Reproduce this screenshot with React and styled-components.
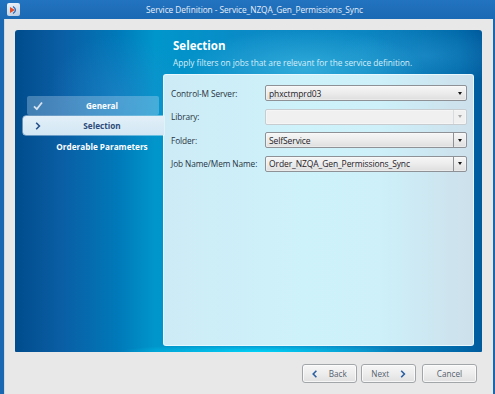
import React from "react";
import styled, { createGlobalStyle } from "styled-components";

const Global = createGlobalStyle`
  html, body { margin: 0; padding: 0; background: #e8e8e8; }
  body { font-family: "Open Sans", "Noto Sans", sans-serif; }
  * { box-sizing: border-box; }
`;

const Window = styled.div`
  width: 495px;
  height: 394px;
  display: flex;
  flex-direction: column;
  background: #1a67b2;
  overflow: hidden;
`;

const TitleBar = styled.div`
  height: 19px;
  flex: none;
  position: relative;
  display: flex;
  align-items: center;
  justify-content: center;
  padding-left: 14px;
  background: linear-gradient(180deg, #2273c0 0%, #1a69b4 100%);
  color: #e6eef8;
  font-size: 8.3px;
  letter-spacing: -0.05px;
`;

const AppIcon = styled.div`
  position: absolute;
  left: 7px;
  top: 3px;
  width: 13px;
  height: 13px;
  border-radius: 2px;
  background: linear-gradient(160deg, #f0f4fa, #b9cbe0);
  display: flex;
  align-items: center;
  justify-content: center;
`;

const Frame = styled.div`
  flex: 1;
  display: flex;
  flex-direction: column;
  margin-left: 4px;
  margin-right: 2px;
  padding: 11px 11px 0 10px;
  background: #e8e8e8;
  border-left: 1px solid #d0d8e0;
`;

const Panel = styled.div`
  height: 322px;
  flex: none;
  display: grid;
  grid-template-columns: 148px 1fr;
  grid-template-rows: 44px 1fr;
  padding: 0 8px 6px 0;
  border-radius: 3px 3px 1px 1px;
  background:
    radial-gradient(ellipse 140px 8px at 52% 100%, rgba(0, 215, 250, 0.95), rgba(0, 215, 250, 0) 100%),
    radial-gradient(ellipse 120px 40px at 62% 12%, rgba(80, 200, 235, 0.55), rgba(80, 200, 235, 0) 100%),
    radial-gradient(ellipse 90px 30px at 88% 8%, rgba(60, 170, 225, 0.35), rgba(60, 170, 225, 0) 100%),
    radial-gradient(ellipse 70px 60px at 22% 20%, rgba(60, 140, 210, 0.35), rgba(60, 140, 210, 0) 100%),
    linear-gradient(90deg, #004c8c 0%, #0a5ea4 10%, #0079b9 22%, #0096cb 30%, #0a8ac6 50%, #0b86c2 75%, #0068a8 95%, #005b9d 100%);
`;

const Header = styled.div`
  grid-column: 2;
  grid-row: 1;
  padding: 8px 0 0 10px;
  color: #ffffff;
`;

const HeaderTitle = styled.div`
  font-size: 11.5px;
  font-weight: 700;
  line-height: 16px;
`;

const HeaderSub = styled.div`
  font-size: 8.3px;
  line-height: 11px;
  margin-top: 3px;
  color: #d6eef8;
  letter-spacing: -0.03px;
`;

const Nav = styled.div`
  grid-column: 1;
  grid-row: 2;
  display: flex;
  flex-direction: column;
  padding-top: 22px;
`;

const NavItem = styled.div`
  position: relative;
  height: ${(p) => (p.$plain ? "18px" : "19px")};
  margin-left: ${(p) => (p.$active ? "8px" : "12px")};
  margin-right: ${(p) => (p.$active ? "-1px" : "4px")};
  margin-bottom: ${(p) => (p.$active ? "2px" : "1px")};
  display: flex;
  align-items: center;
  justify-content: center;
  padding-left: ${(p) => (p.$active ? "17px" : "18px")};
  border-radius: ${(p) => (p.$active ? "3px 0 0 3px" : "2px")};
  font-size: 8.2px;
  font-weight: 700;
  white-space: nowrap;
  color: ${(p) => (p.$active ? "#2c4a78" : "#ffffff")};
  background: ${(p) =>
    p.$active
      ? "linear-gradient(180deg, #e2eff8 0%, #d2e7f4 100%)"
      : p.$done
      ? "rgba(200, 225, 245, 0.32)"
      : "transparent"};
  box-shadow: ${(p) => (p.$active ? "0 0 0 0.5px rgba(255,255,255,0.8)" : "none")};
`;

const NavIcon = styled.span`
  position: absolute;
  left: ${(p) => p.$left}px;
  top: 50%;
  transform: translateY(-50%);
  display: flex;
`;

const Content = styled.div`
  grid-column: 2;
  grid-row: 2;
  border-radius: 3px;
  border: 1px solid rgba(235, 250, 255, 0.85);
  background: linear-gradient(90deg, #cdebf6 0%, #cef2fa 45%, #cdf0f9 70%, #cde0eb 100%);
  padding: 10px 6px 0 6px;
  display: flex;
  flex-direction: column;
  gap: 7.6px;
`;

const Row = styled.div`
  display: grid;
  grid-template-columns: 95px 1fr;
  align-items: center;
  height: 16px;
`;

const Label = styled.div`
  font-size: 8.3px;
  color: #283442;
  letter-spacing: -0.1px;
  padding-left: 1px;
`;

const Select = styled.div`
  height: 16px;
  display: flex;
  align-items: center;
  border: 1px solid ${(p) => (p.$disabled ? "#c6ccd0" : "#8e9296")};
  border-radius: 2px;
  background: ${(p) =>
    p.$disabled
      ? "#f0f0f0"
      : "linear-gradient(180deg, #f6f6f6 0%, #ececec 50%, #dedede 100%)"};
  box-shadow: inset 0 0 0 0.5px rgba(255,255,255,0.7);
`;

const SelectText = styled.div`
  flex: 1;
  padding-left: 3px;
  font-size: 8.5px;
  color: #1e2228;
  letter-spacing: -0.1px;
  white-space: nowrap;
  overflow: hidden;
`;

const Arrow = styled.div`
  width: 13px;
  height: 100%;
  display: flex;
  align-items: center;
  justify-content: center;
  border-left: 1px solid ${(p) => (p.$sep ? (p.$disabled ? "#d8dcde" : "#8e9296") : "transparent")};
  &::after {
    content: "";
    border-left: 2.5px solid transparent;
    border-right: 2.5px solid transparent;
    border-top: 3px solid ${(p) => (p.$disabled ? "#a8a8a8" : "#141414")};
  }
`;

const Footer = styled.div`
  display: flex;
  justify-content: flex-end;
  gap: 4px;
  padding: 12px 5px 0 0;
`;

const Button = styled.div`
  width: ${(p) => p.$w}px;
  height: 19px;
  display: flex;
  align-items: center;
  justify-content: center;
  gap: 11px;
  border: 1px solid #a3a6a9;
  border-radius: 3px;
  background: linear-gradient(180deg, #f6f6f6 0%, #ededed 50%, #e0e0e0 100%);
  box-shadow: inset 0 0 0 1px rgba(255,255,255,0.7);
  font-size: 8.2px;
  color: #56626e;
  margin-left: ${(p) => p.$ml || 0}px;
`;

const Chev = ({ dir = "right", color = "#2a5fa0", size = 7 }) => (
  <svg width={size * 0.7} height={size} viewBox="0 0 7 10">
    {dir === "right" ? (
      <path d="M1.5 1 L5.5 5 L1.5 9" fill="none" stroke={color} strokeWidth="2" />
    ) : (
      <path d="M5.5 1 L1.5 5 L5.5 9" fill="none" stroke={color} strokeWidth="2" />
    )}
  </svg>
);

const Check = () => (
  <svg width="10" height="9" viewBox="0 0 10 9">
    <path d="M1 4.8 L3.8 7.6 L9 1" fill="none" stroke="#d6e2ee" strokeWidth="1.8" />
  </svg>
);

const rows = [
  { label: "Control-M Server:", value: "phxctmprd03", sep: false },
  { label: "Library:", value: "", sep: true, disabled: true },
  { label: "Folder:", value: "SelfService", sep: true },
  { label: "Job Name/Mem Name:", value: "Order_NZQA_Gen_Permissions_Sync", sep: true },
];

export default function App() {
  return (
    <>
      <Global />
      <Window>
        <TitleBar>
          <AppIcon>
            <svg width="10" height="10" viewBox="0 0 10 10">
              <path d="M1 2 L6 5 L1 8 Z" fill="#e0502a" />
              <path d="M4 1.5 Q9 5 4 8.5" fill="none" stroke="#2a6ab8" strokeWidth="1.3" />
            </svg>
          </AppIcon>
          Service Definition - Service_NZQA_Gen_Permissions_Sync
        </TitleBar>
        <Frame>
          <Panel>
            <Header>
              <HeaderTitle>Selection</HeaderTitle>
              <HeaderSub>Apply filters on jobs that are relevant for the service definition.</HeaderSub>
            </Header>
            <Nav>
              <NavItem $done>
                <NavIcon $left={6}><Check /></NavIcon>
                General
              </NavItem>
              <NavItem $active>
                <NavIcon $left={12}><Chev color="#24508a" size={8} /></NavIcon>
                Selection
              </NavItem>
              <NavItem $plain>Orderable Parameters</NavItem>
            </Nav>
            <Content>
              {rows.map((r) => (
                <Row key={r.label}>
                  <Label>{r.label}</Label>
                  <Select $disabled={r.disabled}>
                    <SelectText>{r.value}</SelectText>
                    <Arrow $sep={r.sep} $disabled={r.disabled} />
                  </Select>
                </Row>
              ))}
            </Content>
          </Panel>
          <Footer>
            <Button $w={55}>
              <Chev dir="left" color="#2a5fa0" size={8} />
              <span>Back</span>
            </Button>
            <Button $w={55}>
              <span>Next</span>
              <Chev color="#2a5fa0" size={8} />
            </Button>
            <Button $w={55} $ml={2}>Cancel</Button>
          </Footer>
        </Frame>
      </Window>
    </>
  );
}
